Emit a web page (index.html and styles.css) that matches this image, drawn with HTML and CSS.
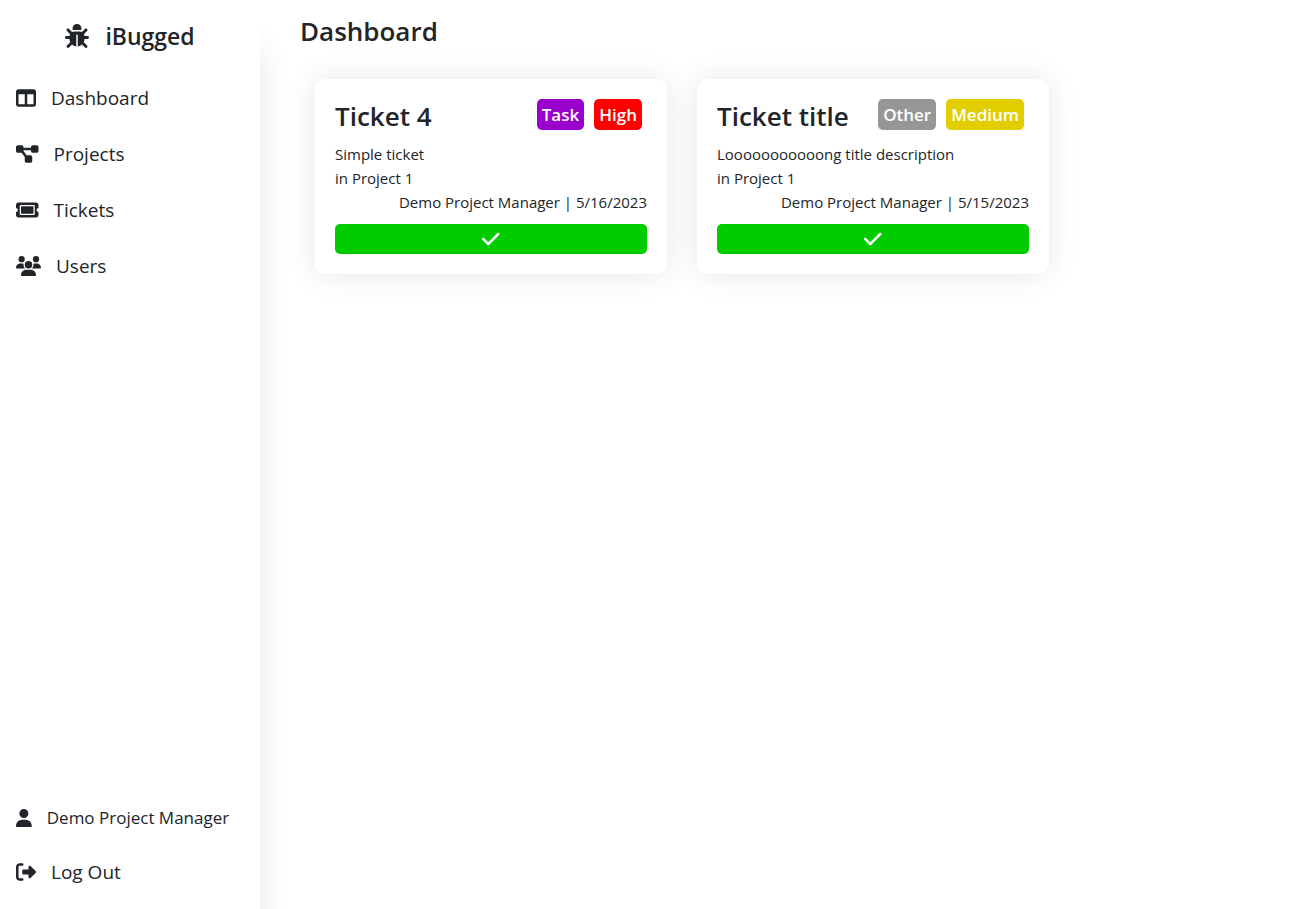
FILE: index.html
```html
<!DOCTYPE html>
<html lang="en">
<head>
<meta charset="utf-8">
<meta name="viewport" content="width=device-width, initial-scale=1">
<title>iBugged</title>
<link rel="stylesheet" href="styles.css">
</head>
<body>
<div class="layout">
  <aside class="sidebar">
    <a class="brand" href="#">
      <svg class="icon" viewBox="0 0 512 512" aria-hidden="true"><path d="M256 0c53 0 96 43 96 96v3.6c0 15.7-12.7 28.4-28.4 28.4H188.4c-15.7 0-28.4-12.7-28.4-28.4V96c0-53 43-96 96-96zM41.4 105.4c12.5-12.5 32.8-12.5 45.3 0l64 64c.7 .7 1.3 1.4 1.9 2.1c14.2-7.3 30.4-11.4 47.5-11.4H312c17.1 0 33.2 4.1 47.5 11.4c.6-.7 1.2-1.4 1.9-2.1l64-64c12.5-12.5 32.8-12.5 45.3 0s12.5 32.8 0 45.3l-64 64c-.7 .7-1.4 1.3-2.1 1.9c6.2 12 10.1 25.3 11.1 39.5H480c17.7 0 32 14.3 32 32s-14.3 32-32 32H416c0 24.6-5.5 47.8-15.4 68.6c2.2 1.3 4.2 2.9 6 4.8l64 64c12.5 12.5 12.5 32.8 0 45.3s-32.8 12.5-45.3 0l-63.1-63.1c-24.5 21.8-55.8 36.2-90.3 39.6V240c0-8.8-7.2-16-16-16s-16 7.2-16 16V479.2c-34.5-3.4-65.8-17.8-90.3-39.6L86.6 502.6c-12.5 12.5-32.8 12.5-45.3 0s-12.5-32.8 0-45.3l64-64c1.9-1.9 3.9-3.4 6-4.8C101.5 367.8 96 344.6 96 320H32c-17.7 0-32-14.3-32-32s14.3-32 32-32H96.3c1.1-14.1 5-27.5 11.1-39.5c-.7-.6-1.4-1.2-2.1-1.9l-64-64c-12.5-12.5-12.5-32.8 0-45.3z"/></svg>
      <span>iBugged</span>
    </a>
    <nav class="nav">
      <a class="nav-link" href="#">
        <svg class="icon" viewBox="0 0 512 512" aria-hidden="true"><path d="M0 96C0 60.7 28.7 32 64 32H448c35.3 0 64 28.7 64 64V416c0 35.3-28.7 64-64 64H64c-35.3 0-64-28.7-64-64V96zm64 64V416H224V160H64zm384 0H288V416H448V160z"/></svg>
        <span>Dashboard</span>
      </a>
      <a class="nav-link" href="#">
        <svg class="icon" viewBox="0 0 576 512" aria-hidden="true"><path d="M0 80C0 53.5 21.5 32 48 32h96c26.5 0 48 21.5 48 48V96H384V80c0-26.5 21.5-48 48-48h96c26.5 0 48 21.5 48 48v96c0 26.5-21.5 48-48 48H432c-26.5 0-48-21.5-48-48V160H192v16c0 1.7-.1 3.4-.3 5L272 288h96c26.5 0 48 21.5 48 48v96c0 26.5-21.5 48-48 48H272c-26.5 0-48-21.5-48-48V336c0-1.7 .1-3.4 .3-5L144 224H48c-26.5 0-48-21.5-48-48V80z"/></svg>
        <span>Projects</span>
      </a>
      <a class="nav-link" href="#">
        <svg class="icon" viewBox="0 0 576 512" aria-hidden="true"><path d="M64 64C28.7 64 0 92.7 0 128v64c0 8.8 7.4 15.7 15.7 18.6C34.5 217.1 48 235 48 256s-13.5 38.9-32.3 45.4C7.4 304.3 0 311.2 0 320v64c0 35.3 28.7 64 64 64H512c35.3 0 64-28.7 64-64V320c0-8.8-7.4-15.7-15.7-18.6C541.5 294.9 528 277 528 256s13.5-38.9 32.3-45.4c8.3-2.9 15.7-9.8 15.7-18.6V128c0-35.3-28.7-64-64-64H64zm64 112l0 160c0 8.8 7.2 16 16 16H432c8.8 0 16-7.2 16-16V176c0-8.8-7.2-16-16-16H144c-8.8 0-16 7.2-16 16zM96 160c0-17.7 14.3-32 32-32H448c17.7 0 32 14.3 32 32V352c0 17.7-14.3 32-32 32H128c-17.7 0-32-14.3-32-32V160z"/></svg>
        <span>Tickets</span>
      </a>
      <a class="nav-link" href="#">
        <svg class="icon" viewBox="0 0 640 512" aria-hidden="true"><path d="M144 0a80 80 0 1 1 0 160A80 80 0 1 1 144 0zM512 0a80 80 0 1 1 0 160A80 80 0 1 1 512 0zM0 298.7C0 239.8 47.8 192 106.7 192h42.7c15.9 0 31 3.5 44.6 9.7c-1.3 7.2-1.9 14.7-1.9 22.3c0 38.2 16.8 72.5 43.3 96c-.2 0-.4 0-.7 0H21.3C9.6 320 0 310.4 0 298.7zM405.3 320c-.2 0-.4 0-.7 0c26.6-23.5 43.3-57.8 43.3-96c0-7.6-.7-15-1.9-22.3c13.6-6.3 28.7-9.7 44.6-9.7h42.7C592.2 192 640 239.8 640 298.7c0 11.8-9.6 21.3-21.3 21.3H405.3zM224 224a96 96 0 1 1 192 0 96 96 0 1 1 -192 0zM128 485.3C128 411.7 187.7 352 261.3 352H378.7C452.3 352 512 411.7 512 485.3c0 14.7-11.9 26.7-26.7 26.7H154.7c-14.7 0-26.7-11.9-26.7-26.7z"/></svg>
        <span>Users</span>
      </a>
    </nav>
    <div class="account">
      <a class="nav-link nav-link-user" href="#">
        <svg class="icon" viewBox="0 0 448 512" aria-hidden="true"><path d="M224 256A128 128 0 1 0 224 0a128 128 0 1 0 0 256zm-45.7 48C79.8 304 0 383.8 0 482.3C0 498.7 13.3 512 29.7 512H418.3c16.4 0 29.7-13.3 29.7-29.7C448 383.8 368.2 304 269.7 304H178.3z"/></svg>
        <span>Demo Project Manager</span>
      </a>
      <a class="nav-link" href="#">
        <svg class="icon" viewBox="0 0 512 512" aria-hidden="true"><path d="M377.9 105.9L500.7 228.7c7.2 7.2 11.3 17.1 11.3 27.3s-4.1 20.1-11.3 27.3L377.9 406.1c-6.4 6.4-15 9.9-24 9.9c-18.7 0-33.9-15.2-33.9-33.9l0-62.1-128 0c-17.7 0-32-14.3-32-32l0-64c0-17.7 14.3-32 32-32l128 0 0-62.1c0-18.7 15.2-33.9 33.9-33.9c9 0 17.6 3.6 24 9.9zM160 96L96 96c-17.7 0-32 14.3-32 32l0 256c0 17.7 14.3 32 32 32l64 0c17.7 0 32 14.3 32 32s-14.3 32-32 32l-64 0c-53 0-96-43-96-96L0 128C0 75 43 32 96 32l64 0c17.7 0 32 14.3 32 32s-14.3 32-32 32z"/></svg>
        <span>Log Out</span>
      </a>
    </div>
  </aside>
  <main class="content">
    <h1 class="page-title">Dashboard</h1>
    <section class="tickets">
      <article class="card">
        <header class="card-header">
          <h2 class="card-title">Ticket 4</h2>
          <div class="badges">
            <span class="badge badge-task">Task</span>
            <span class="badge badge-high">High</span>
          </div>
        </header>
        <p class="card-text">Simple ticket</p>
        <p class="card-text">in Project 1</p>
        <p class="card-text card-meta">Demo Project Manager | 5/16/2023</p>
        <button class="done" type="button" aria-label="Complete ticket">
          <svg class="icon" viewBox="0 0 448 512" aria-hidden="true"><path d="M438.6 105.4c12.5 12.5 12.5 32.8 0 45.3l-256 256c-12.5 12.5-32.8 12.5-45.3 0l-128-128c-12.5-12.5-12.5-32.8 0-45.3s32.8-12.5 45.3 0L160 338.7 393.4 105.4c12.5-12.5 32.8-12.5 45.3 0z"/></svg>
        </button>
      </article>
      <article class="card">
        <header class="card-header">
          <h2 class="card-title">Ticket title</h2>
          <div class="badges">
            <span class="badge badge-other">Other</span>
            <span class="badge badge-medium">Medium</span>
          </div>
        </header>
        <p class="card-text">Looooooooooong title description</p>
        <p class="card-text">in Project 1</p>
        <p class="card-text card-meta">Demo Project Manager | 5/15/2023</p>
        <button class="done" type="button" aria-label="Complete ticket">
          <svg class="icon" viewBox="0 0 448 512" aria-hidden="true"><path d="M438.6 105.4c12.5 12.5 12.5 32.8 0 45.3l-256 256c-12.5 12.5-32.8 12.5-45.3 0l-128-128c-12.5-12.5-12.5-32.8 0-45.3s32.8-12.5 45.3 0L160 338.7 393.4 105.4c12.5-12.5 32.8-12.5 45.3 0z"/></svg>
        </button>
      </article>
    </section>
  </main>
</div>
</body>
</html>
```
FILE: styles.css
```css
*,
*::before,
*::after {
  box-sizing: border-box;
}

body {
  margin: 0;
  background: #fff;
  color: #212529;
  font-family: "Segoe UI", "Open Sans", "Noto Sans", sans-serif;
  font-size: 15px;
  line-height: 24px;
}

h1,
h2,
p {
  margin: 0;
}

a {
  color: inherit;
  text-decoration: none;
}

.icon {
  display: block;
  flex: none;
  height: 20px;
  fill: currentColor;
}

.layout {
  display: flex;
  min-height: 100vh;
}

.sidebar {
  display: flex;
  flex: none;
  flex-direction: column;
  width: 260px;
  padding: 16px 0 10px;
  box-shadow: 0 50px 30px rgba(0, 0, 0, 0.1);
}

.brand {
  display: flex;
  align-items: center;
  justify-content: center;
  gap: 16px;
  height: 40px;
  margin-bottom: 14px;
  font-size: 23px;
  font-weight: 600;
}

.brand .icon {
  height: 24px;
}

.nav-link {
  display: flex;
  align-items: center;
  gap: 15px;
  height: 56px;
  padding: 0 16px;
  font-size: 19px;
}

.account {
  margin-top: auto;
}

.account .nav-link {
  height: 54px;
}

.account .nav-link-user {
  font-size: 17px;
}

.nav-link-user .icon {
  height: 18px;
}

.content {
  flex: 1;
  min-width: 0;
  padding: 14px 40px;
}

.page-title,
.card-title {
  font-size: 26px;
  font-weight: 600;
  line-height: 35px;
}

.page-title {
  margin-bottom: 30px;
}

.tickets {
  display: flex;
  flex-wrap: wrap;
  gap: 30px;
  padding: 0 15px;
}

.card {
  width: 352px;
  padding: 20px;
  border-radius: 10px;
  background: #fff;
  box-shadow: 0 0 30px rgba(0, 0, 0, 0.1);
}

.card-header {
  display: flex;
  align-items: flex-start;
  justify-content: space-between;
  margin-bottom: 8px;
}

.badges {
  display: flex;
  gap: 10px;
  padding-right: 5px;
}

.badge {
  padding: 0 5px;
  border-radius: 5px;
  color: #fff;
  font-size: 17px;
  font-weight: 600;
  line-height: 31px;
}

.badge-task {
  background: #9900cc;
}

.badge-high {
  background: #ff0000;
}

.badge-other {
  background: #969696;
}

.badge-medium {
  background: #e1cd00;
}

.card-meta {
  text-align: right;
}

.done {
  display: flex;
  align-items: center;
  justify-content: center;
  width: 100%;
  height: 30px;
  margin-top: 10px;
  padding: 0;
  border: 0;
  border-radius: 5px;
  background: #00cc00;
  color: #fff;
  cursor: pointer;
}
```
